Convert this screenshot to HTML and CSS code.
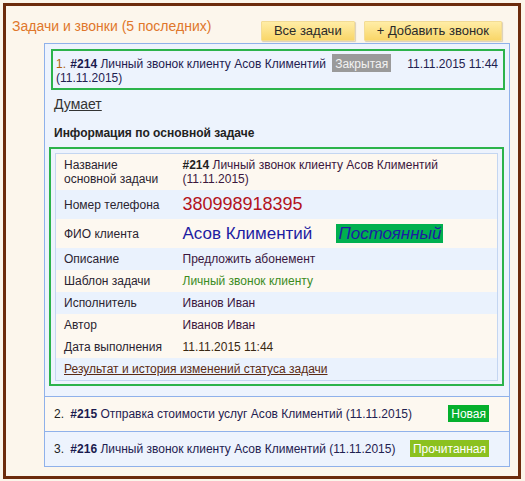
FILE: index.html
```html
<!DOCTYPE html>
<html lang="ru">
<head>
<meta charset="utf-8">
<title>Задачи и звонки</title>
<link rel="stylesheet" href="styles.css">
</head>
<body>
<div class="frame">
  <div class="header">
    <div class="title">Задачи и звонки (5 последних)</div>
    <div class="actions">
      <button class="btn">Все задачи</button>
      <button class="btn">+ Добавить звонок</button>
    </div>
  </div>
  <div class="tasks">
    <div class="task task-open">
      <div class="task-head">
        <span class="task-date">11.11.2015 11:44</span>
        <span class="num num-active">1.</span> <b class="tid">#214</b> Личный звонок клиенту Асов Климентий <span class="badge badge-closed">Закрытая</span><br>(11.11.2015)
      </div>
      <a class="status-link" href="#">Думает</a>
      <div class="section-title">Информация по основной задаче</div>
      <div class="details">
        <table class="info">
          <colgroup><col class="col-label"><col></colgroup>
          <tr class="row-cream">
            <td class="label">Название<br>основной задачи</td>
            <td class="value"><b class="tid">#214</b> Личный звонок клиенту Асов Климентий<br>(11.11.2015)</td>
          </tr>
          <tr class="row-blue">
            <td class="label">Номер телефона</td>
            <td class="value"><span class="phone">380998918395</span></td>
          </tr>
          <tr class="row-cream">
            <td class="label">ФИО клиента</td>
            <td class="value"><span class="client">Асов Климентий</span><span class="client-type">Постоянный</span></td>
          </tr>
          <tr class="row-blue">
            <td class="label">Описание</td>
            <td class="value">Предложить абонемент</td>
          </tr>
          <tr class="row-cream">
            <td class="label">Шаблон задачи</td>
            <td class="value template">Личный звонок клиенту</td>
          </tr>
          <tr class="row-blue">
            <td class="label">Исполнитель</td>
            <td class="value">Иванов Иван</td>
          </tr>
          <tr class="row-cream">
            <td class="label">Автор</td>
            <td class="value">Иванов Иван</td>
          </tr>
          <tr class="row-cream">
            <td class="label">Дата выполнения</td>
            <td class="value date">11.11.2015 11:44</td>
          </tr>
          <tr class="row-blue">
            <td class="label" colspan="2"><a class="history-link" href="#">Результат и история изменений статуса задачи</a></td>
          </tr>
        </table>
      </div>
    </div>
    <div class="task task-row task-cream">
      <div class="task-text"><span class="num">2.</span> <b class="tid">#215</b> Отправка стоимости услуг Асов Климентий (11.11.2015)</div>
      <span class="badge badge-new">Новая</span>
    </div>
    <div class="task task-row">
      <div class="task-text"><span class="num">3.</span> <b class="tid">#216</b> Личный звонок клиенту Асов Климентий (11.11.2015)</div>
      <span class="badge badge-read">Прочитанная</span>
    </div>
  </div>
</div>
</body>
</html>
```
FILE: styles.css
```css
html, body {
  margin: 0;
  padding: 0;
  background: #fbf5ea;
}
body {
  font-family: "Liberation Sans", Arial, sans-serif;
  font-size: 12px;
  line-height: 14px;
  color: #222;
}
.frame {
  margin: 3px;
  width: 512px;
  border: 3px solid #6c2b0c;
  background: #fcf6ec;
  padding-bottom: 9px;
}
.header {
  display: flex;
  justify-content: space-between;
  align-items: flex-start;
  height: 37px;
  box-sizing: border-box;
  padding: 6px 16px 0 6px;
}
.title {
  margin-top: 6px;
  font-size: 14px;
  line-height: 16px;
  color: #e0772b;
}
.actions {
  display: flex;
  gap: 9px;
  margin-top: 9px;
}
.btn {
  height: 20px;
  box-sizing: border-box;
  margin: 0;
  padding: 0 12px;
  font-family: "Liberation Sans", Arial, sans-serif;
  font-size: 13px;
  line-height: 18px;
  color: #2a2a2a;
  background: linear-gradient(#ffeda6, #f9d669);
  border: 1px solid #f3dc94;
  border-radius: 1px;
  box-shadow: 1px 1px 1px rgba(120, 90, 20, 0.25);
}
.tasks {
  margin: 0 8px 0 38px;
  border: 1px solid #8fb1ea;
  background: #edf3fd;
}
.task {
  color: #1f2150;
}
.task + .task {
  border-top: 1px solid #8fb1ea;
}
.task-open {
  padding: 5px 4px 10px 4px;
}
.task-head {
  margin-left: 2px;
  border: 2px solid #2cb34b;
  padding: 6px 3px 3px 3px;
}
.task-date {
  float: right;
  margin-right: 2px;
}
.num {
  color: #222;
  margin-right: 3px;
}
.num-active {
  color: #b0650e;
  margin-right: 1px;
}
.tid {
  color: #1a1a4e;
  font-weight: bold;
}
.badge {
  padding: 2px 3px 1px;
  color: #fff;
  font-size: 12px;
  line-height: 14px;
}
.badge-closed {
  margin-left: 3px;
  background: #9a9a9a;
  color: #f2f2f2;
  padding: 3px 3px 1px;
}
.badge-new {
  background: #05b02d;
}
.badge-read {
  background: #8bc11f;
}
.status-link {
  display: block;
  margin: 6px 0 0 5px;
  width: max-content;
  font-size: 14px;
  line-height: 16px;
  color: #333;
  text-decoration: underline;
}
.section-title {
  margin: 14px 0 0 5px;
  font-weight: bold;
  color: #222;
}
.details {
  margin: 7px 1px 0 0;
  border: 2px solid #2cb34b;
  padding: 4px 4px 3px 4px;
}
.info {
  width: 100%;
  table-layout: fixed;
  border-collapse: collapse;
  border: 1px solid #c4d6f1;
}
.col-label {
  width: 119px;
}
.info td {
  padding: 4px 8px;
  vertical-align: middle;
}
.info td.label {
  color: #2a2430;
}
.row-cream {
  background: #fdf8f0;
}
.row-blue {
  background: #eaf2fd;
}
.value {
  color: #3b173d;
}
.value .tid {
  color: #222;
}
.phone {
  font-size: 18px;
  line-height: 21px;
  color: #b3121c;
}
.client {
  font-size: 17px;
  line-height: 21px;
  color: #1d1ca2;
}
.client-type {
  margin-left: 24px;
  padding: 0 2px 0 2px;
  font-size: 17px;
  line-height: 21px;
  font-style: italic;
  color: #1d1ca2;
  background: #00b04f;
}
.template {
  color: #3b8b1e;
}
.value.date {
  color: #3a2812;
}
.history-link {
  color: #5b2b14;
  text-decoration: underline;
}
.task-row {
  display: flex;
  justify-content: space-between;
  align-items: baseline;
  padding: 8px 20px 9px 9px;
}
.task-cream {
  background: #fdf8f0;
}
```
